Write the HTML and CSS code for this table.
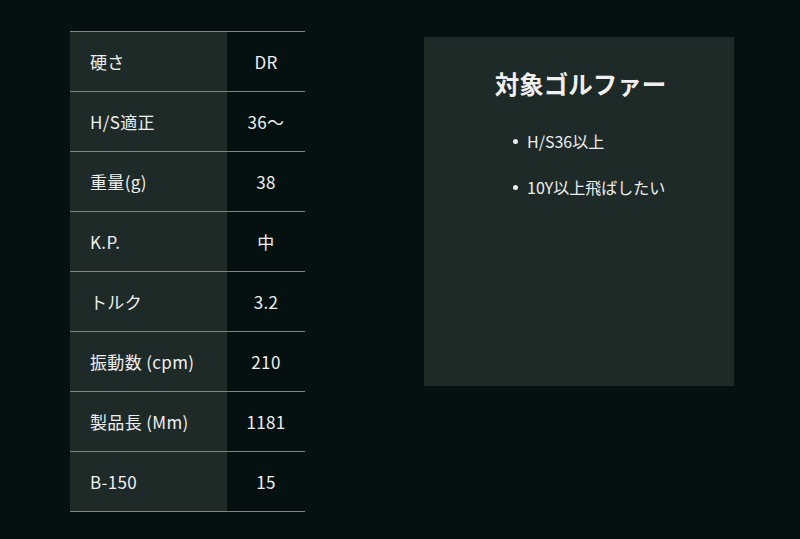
FILE: index.html
```html
<!DOCTYPE html>
<html lang="ja">
<head>
<meta charset="utf-8">
<link rel="stylesheet" href="styles.css">
</head>
<body>
<div class="page">
  <table class="spec">
    <tr><th>硬さ</th><td>DR</td></tr>
    <tr><th>H/S適正</th><td>36〜</td></tr>
    <tr><th>重量(g)</th><td>38</td></tr>
    <tr><th>K.P.</th><td>中</td></tr>
    <tr><th>トルク</th><td>3.2</td></tr>
    <tr><th>振動数 (cpm)</th><td>210</td></tr>
    <tr><th>製品長 (Mm)</th><td>1181</td></tr>
    <tr><th>B-150</th><td>15</td></tr>
  </table>
  <div class="panel">
    <h2 class="title">対象ゴルファー</h2>
    <ul class="list">
      <li>H/S36以上</li>
      <li>10Y以上飛ばしたい</li>
    </ul>
  </div>
</div>
</body>
</html>
```
FILE: styles.css
```css
html, body {
  margin: 0;
  padding: 0;
  background: #041110;
  color: #efefef;
  font-family: "Noto Sans CJK JP", "Noto Sans", sans-serif;
}
.page {
  display: flex;
  align-items: flex-start;
  padding: 31px 0 0 70px;
  gap: 119px;
}
.spec {
  border-collapse: collapse;
  width: 235px;
  font-size: 17px;
  letter-spacing: 0.02em;
}
.spec tr {
  height: 60px;
  border-top: 1px solid #7d8583;
  border-bottom: 1px solid #7d8583;
}
.spec th {
  width: 157px;
  box-sizing: border-box;
  background: #1e2a28;
  text-align: left;
  font-weight: normal;
  padding: 0 0 0 20px;
}
.spec td {
  text-align: center;
  padding: 0;
}
.panel {
  margin-top: 6px;
  width: 310px;
  height: 349px;
  background: #1e2a28;
  box-sizing: border-box;
  padding-top: 30px;
}
.title {
  margin: 0;
  padding-left: 3px;
  text-align: center;
  font-size: 24.5px;
  line-height: 34px;
  font-weight: bold;
}
.list {
  list-style: none;
  margin: 28px 0 0;
  padding: 0 0 0 103px;
  font-size: 16px;
}
.list li {
  position: relative;
  height: 24px;
  line-height: 24px;
  margin-bottom: 22px;
}
.list li::before {
  content: "";
  position: absolute;
  left: -14px;
  top: 10px;
  width: 5px;
  height: 5px;
  border-radius: 50%;
  background: #efefef;
}
```
